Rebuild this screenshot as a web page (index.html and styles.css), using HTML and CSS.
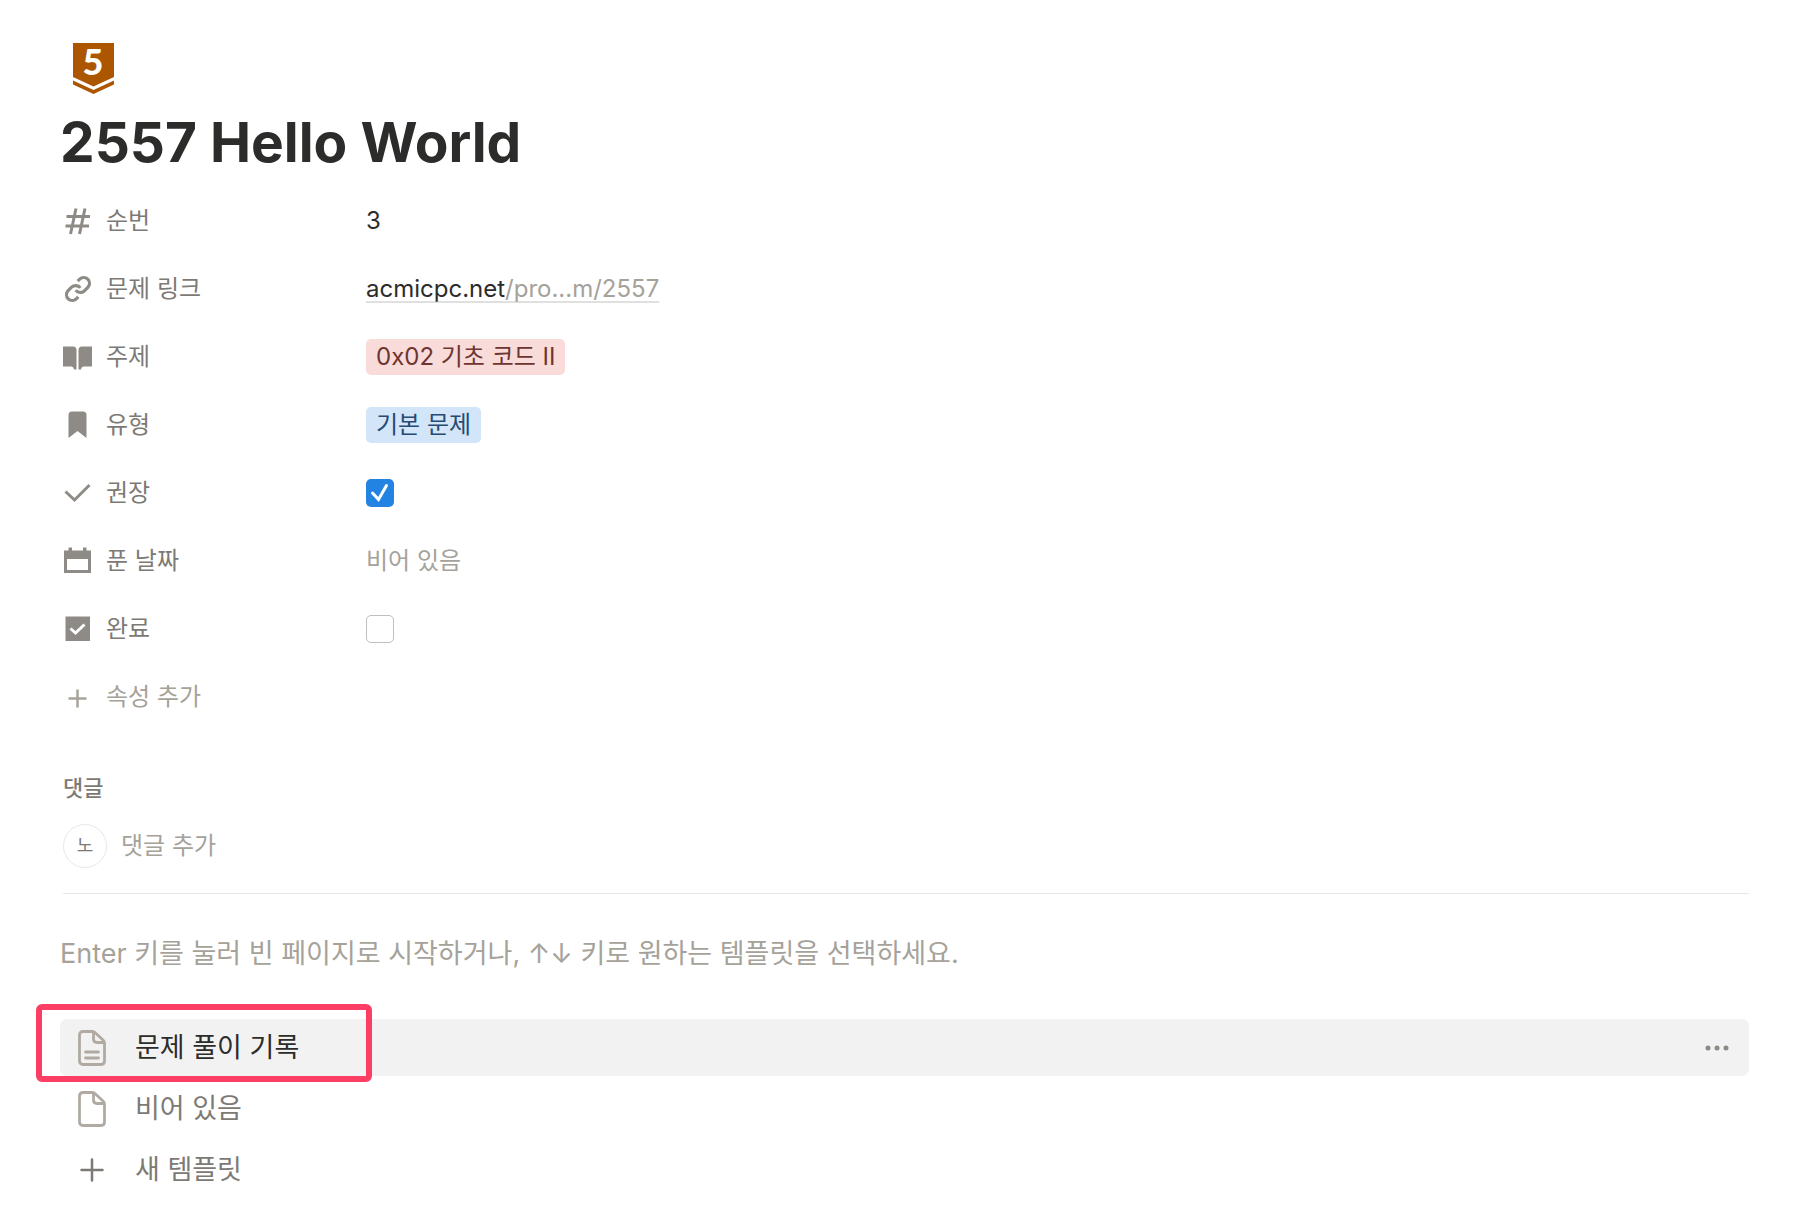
FILE: index.html
```html
<!DOCTYPE html>
<html lang="ko">
<head>
  <meta charset="UTF-8">
  <meta name="viewport" content="width=device-width, initial-scale=1.0">
  <title>2557 Hello World</title>
  <link rel="stylesheet" href="styles.css">
</head>
<body>
  <main class="page">
    <header class="page-header">
      <svg class="badge" viewBox="0 0 41 51" aria-hidden="true">
        <path d="M0 0H41V34L20.500 43.500L0 34Z" fill="#ad5600"/>
        <path d="M0 37.500L20.500 47L41 37.500V41.500L20.500 51L0 41.500Z" fill="#ad5600"/>
        <text class="badge-level" x="20" y="32" text-anchor="middle">5</text>
      </svg>
      <h1>2557 Hello World</h1>
    </header>

    <section class="properties">
      <div class="property">
        <div class="property-name">
          <svg class="icon" viewBox="0 0 30 30"><path class="line" d="M3.500 10.500H27M2.500 20H26M13 2.500L7.500 28M22 2.500L16.500 28"/></svg>
          <span>순번</span>
        </div>
        <div class="property-value">3</div>
      </div>

      <div class="property">
        <div class="property-name">
          <svg class="icon" viewBox="-1 -1 26 26"><path class="line link-line" d="M10 13a5 5 0 0 0 7.540.540l3-3a5 5 0 0 0-7.070-7.070l-1.720 1.710M14 11a5 5 0 0 0-7.540-.540l-3 3a5 5 0 0 0 7.070 7.070l1.710-1.710"/></svg>
          <span>문제 링크</span>
        </div>
        <div class="property-value">
          <a class="url" href="https://acmicpc.net/problem/2557">acmicpc.net<span class="url-path">/pro...m/2557</span></a>
        </div>
      </div>

      <div class="property">
        <div class="property-name">
          <svg class="icon" viewBox="0 0 30 30"><path d="M0 4.500H10Q13.500 4.500 13.500 8V27.500H11Q10.500 24.500 8 24.500H0ZM29 4.500H19Q15.500 4.500 15.500 8V27.500H18Q18.500 24.500 21 24.500H29Z"/></svg>
          <span>주제</span>
        </div>
        <div class="property-value"><span class="tag tag-red">0x02 기초 코드 II</span></div>
      </div>

      <div class="property">
        <div class="property-name">
          <svg class="icon" viewBox="0 0 30 30"><path d="M5.500 5Q5.500 1.500 9 1.500H20Q23.500 1.500 23.500 5V28L14.500 21L5.500 28Z"/></svg>
          <span>유형</span>
        </div>
        <div class="property-value"><span class="tag tag-blue">기본 문제</span></div>
      </div>

      <div class="property">
        <label class="property-name" for="recommended">
          <svg class="icon" viewBox="0 0 30 30"><path class="line" d="M2.500 13.500L11.500 22L26.500 7"/></svg>
          <span>권장</span>
        </label>
        <div class="property-value check">
          <input type="checkbox" id="recommended" checked>
          <svg class="check-mark" viewBox="0 0 28 28"><path d="M6.500 14L12.500 20.500L20.500 6.500"/></svg>
        </div>
      </div>

      <div class="property">
        <div class="property-name">
          <svg class="icon" viewBox="0 0 30 30"><path fill-rule="evenodd" d="M1 4.500H5.500V1.500H9V4.500H20V1.500H23.500V4.500H28V27H1ZM4 13V24H25V13Z"/></svg>
          <span>푼 날짜</span>
        </div>
        <div class="property-value empty">비어 있음</div>
      </div>

      <div class="property">
        <label class="property-name" for="done">
          <svg class="icon" viewBox="0 0 30 30"><path d="M2.500 2.500H27V27H2.500Z"/><path class="line white-line" d="M7.500 14.500L12.500 19L21.500 10.500"/></svg>
          <span>완료</span>
        </label>
        <div class="property-value check">
          <input type="checkbox" id="done">
        </div>
      </div>

      <button type="button" class="property-name add-property">
        <svg class="icon" viewBox="0 0 30 30"><path class="line thin-line" d="M5.500 16.500H23.500M14.500 7.500V25.500"/></svg>
        <span>속성 추가</span>
      </button>
    </section>

    <section class="comments">
      <h2>댓글</h2>
      <div class="comment-row">
        <span class="avatar">노</span>
        <input type="text" class="comment-input" placeholder="댓글 추가" aria-label="댓글 추가">
      </div>
    </section>

    <p class="hint">Enter 키를 눌러 빈 페이지로 시작하거나, ↑↓ 키로 원하는 템플릿을 선택하세요.</p>

    <div class="templates">
      <div class="template selected">
        <button type="button" class="template-button">
          <svg class="file-icon" viewBox="0 0 28 36"><path d="M5 1.500H14.500Q16 1.500 17.500 3L25 10Q26.500 11.500 26.500 13V31Q26.500 34.500 23 34.500H5Q1.500 34.500 1.500 31V5Q1.500 1.500 5 1.500ZM15.500 2V9Q15.500 12.500 19 12.500H26M7.500 22H20.500M7.500 28H20.500"/></svg>
          <span>문제 풀이 기록</span>
        </button>
        <button type="button" class="more-button" aria-label="더 보기">
          <svg viewBox="0 0 24 6"><circle cx="3" cy="3" r="2.500"/><circle cx="12" cy="3" r="2.500"/><circle cx="21" cy="3" r="2.500"/></svg>
        </button>
        <span class="highlight"></span>
      </div>
      <div class="template">
        <button type="button" class="template-button">
          <svg class="file-icon" viewBox="0 0 28 36"><path d="M5 1.500H14.500Q16 1.500 17.500 3L25 10Q26.500 11.500 26.500 13V31Q26.500 34.500 23 34.500H5Q1.500 34.500 1.500 31V5Q1.500 1.500 5 1.500ZM15.500 2V9Q15.500 12.500 19 12.500H26"/></svg>
          <span>비어 있음</span>
        </button>
      </div>
      <div class="template">
        <button type="button" class="template-button">
          <svg class="file-icon plus-icon" viewBox="0 0 28 36"><path d="M3.500 18H24.500M14 7.500V28.500"/></svg>
          <span>새 템플릿</span>
        </button>
      </div>
    </div>
  </main>
</body>
</html>
```

FILE: styles.css
```css
* {
  box-sizing: border-box;
}
body {
  margin: 0;
  background-color: #fff;
  color: #2c2c2b;
  font-family: Inter, "Noto Sans CJK KR", sans-serif;
  font-size: 24px;
  line-height: 36px;
}
button, input {
  font: inherit;
  color: inherit;
}
button {
  border: none;
  background: none;
  padding: 0;
  text-align: left;
  cursor: pointer;
}
svg {
  display: block;
  flex-shrink: 0;
  overflow: visible;
}
.page {
  padding: 43px 63px 32px 60px;
}

/* Header */
.badge {
  width: 41px;
  height: 51px;
  margin-left: 13px;
}
.badge-level {
  font-family: Lato, sans-serif;
  font-size: 36px;
  font-weight: 900;
  fill: #fff;
}
h1 {
  margin: 14px 0 11px;
  font-size: 55px;
  font-weight: 700;
  line-height: 68px;
}

/* Properties */
.property {
  display: flex;
  align-items: center;
  min-height: 68px;
}
.property-name {
  display: flex;
  align-items: center;
  gap: 13px;
  width: 306px;
  padding-left: 3px;
  flex-shrink: 0;
  color: #7d7a75;
}
.property-value {
  flex: 1;
}
.icon {
  width: 30px;
  height: 30px;
  fill: #8e8b86;
}
.line {
  fill: none;
  stroke: #8e8b86;
  stroke-width: 3;
}
.link-line {
  stroke-width: 2.8;
}
.white-line {
  stroke: #fff;
}
.thin-line {
  stroke: #a8a49c;
  stroke-width: 2.5;
}
.url {
  color: inherit;
  text-decoration: underline #e0e0df 2px;
  text-underline-offset: 4px;
  text-decoration-skip-ink: none;
}
.url-path, .empty {
  color: #a5a29a;
}
.tag {
  display: inline-block;
  padding: 0 10px;
  border-radius: 5px;
}
.tag-red {
  background-color: #f9dcd9;
  color: #6d3531;
}
.tag-blue {
  background-color: #d3e5f8;
  color: #264a72;
}
.check {
  position: relative;
}
.check input {
  appearance: none;
  display: block;
  width: 28px;
  height: 28px;
  margin: 0;
  border: 1px solid #c0bfbd;
  border-radius: 5px;
}
.check input:checked {
  border: none;
  background-color: #2383e2;
}
.check-mark {
  position: absolute;
  top: 0;
  left: 0;
  width: 28px;
  height: 28px;
  fill: none;
  stroke: #fff;
  stroke-width: 3;
  stroke-linecap: round;
  pointer-events: none;
}
.add-property {
  min-height: 68px;
  color: #a5a29a;
}

/* Comments */
.comments {
  margin: 42px 0 0 3px;
  padding-bottom: 25px;
  border-bottom: 1px solid #e8e8e7;
}
h2 {
  margin: 0 0 21px;
  color: #7d7a75;
  font-size: 22px;
  font-weight: 500;
  line-height: 30px;
}
.comment-row {
  display: flex;
  align-items: center;
  gap: 14px;
}
.avatar {
  display: flex;
  align-items: center;
  justify-content: center;
  width: 44px;
  height: 44px;
  border: 1px solid #e8e8e7;
  border-radius: 50%;
  color: #7d7a75;
  font-size: 18px;
}
.comment-input {
  flex: 1;
  padding: 0;
  border: none;
  outline: none;
}
.comment-input::placeholder {
  color: #a5a29a;
}

/* Templates */
.hint {
  margin: 42px 0 47px;
  color: #a5a29a;
  font-size: 27px;
}
.templates {
  display: flex;
  flex-direction: column;
  gap: 4px;
}
.template {
  position: relative;
  display: flex;
  align-items: center;
  border-radius: 7px;
  color: #7d7a75;
  font-size: 27px;
}
.template-button {
  display: flex;
  align-items: center;
  gap: 29px;
  flex: 1;
  min-height: 57px;
  padding-left: 18px;
}
.selected {
  background-color: #f2f2f2;
  color: #2c2c2b;
}
.file-icon {
  width: 28px;
  height: 36px;
  fill: none;
  stroke: #b0aaa2;
  stroke-width: 2.8;
  stroke-linecap: round;
}
.plus-icon {
  stroke: #7d7a75;
  stroke-width: 2.5;
}
.more-button {
  padding: 12px 20px;
}
.more-button svg {
  width: 24px;
  height: 6px;
  fill: #8e8b86;
}
/* Frame drawn over the selected template */
.highlight {
  position: absolute;
  top: -15px;
  left: -24px;
  width: 336px;
  height: 78px;
  border: 6px solid #fc3d64;
  border-radius: 6px;
  pointer-events: none;
}
```
